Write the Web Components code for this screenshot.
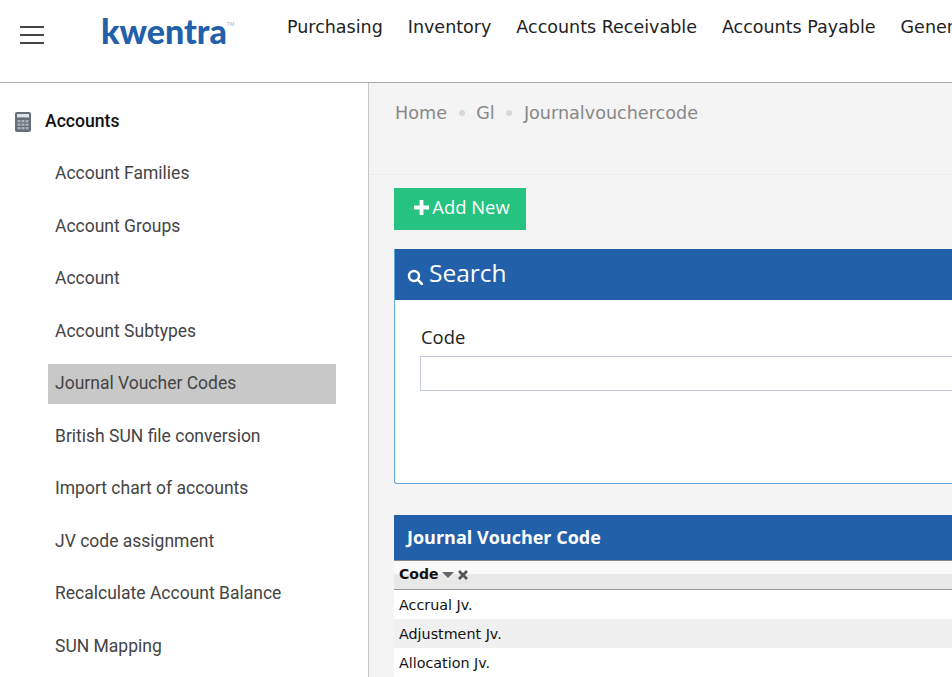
<!DOCTYPE html>
<html><head><meta charset="utf-8"><title>Journal Voucher Codes</title>
<style>
html,body{margin:0;padding:0;height:677px;overflow:hidden;background:#fff}
body{font-family:"Roboto",sans-serif;color:#222;display:block}
app-shell{width:952px;height:677px}
</style></head><body>
<app-shell>
<top-bar></top-bar>
<div slot="side">
<side-nav>
<nav-item>Account Families</nav-item>
<nav-item>Account Groups</nav-item>
<nav-item>Account</nav-item>
<nav-item>Account Subtypes</nav-item>
<nav-item active>Journal Voucher Codes</nav-item>
<nav-item>British SUN file conversion</nav-item>
<nav-item>Import chart of accounts</nav-item>
<nav-item>JV code assignment</nav-item>
<nav-item>Recalculate Account Balance</nav-item>
<nav-item>SUN Mapping</nav-item>
</side-nav>
</div>
<main-area slot="main"></main-area>
</app-shell>
<script>
function def(name, html){
  customElements.define(name, class extends HTMLElement{
    constructor(){super();this.attachShadow({mode:'open'}).innerHTML=html;}
  });
}
def('app-shell',`<style>
:host{display:grid;grid-template-rows:83px 594px;grid-template-columns:369px 583px;overflow:hidden}
.t{grid-column:1/3;min-width:0;overflow:hidden}
.s{min-width:0;overflow:hidden}
.m{min-width:0;overflow:hidden}
</style><div class="t"><slot></slot></div><div class="s"><slot name="side"></slot></div><div class="m"><slot name="main"></slot></div>`);
def('top-bar',`<style>
:host{display:flex;height:83px;box-sizing:border-box;border-bottom:1px solid #aaa;background:#fff;overflow:hidden}
.burger{display:flex;flex-direction:column;gap:6px;width:24px;margin:26px 0 0 20px;flex:none}
.burger i{display:block;height:2px;background:#444}
.logo{margin:11px 0 0 57px;width:135px;height:40px;position:relative;font:900 34px/40px "Lato",sans-serif;color:#2260aa;flex:none}
.logo sup{position:absolute;left:126px;top:9px;font:400 5px/8px "Roboto",sans-serif;color:#9fb6d2}
nav{display:flex;gap:25px;margin:16px 0 0 51px;font:400 17.5px/22px "DejaVu Sans",sans-serif;color:#222;white-space:nowrap;flex:none}
</style><div class="burger"><i></i><i></i><i></i></div>
<div class="logo">kwentra<sup>TM</sup></div>
<nav><span>Purchasing</span><span>Inventory</span><span>Accounts Receivable</span><span>Accounts Payable</span><span>General Ledger</span></nav>`);
def('side-nav',`<style>
:host{display:block;height:594px;box-sizing:border-box;border-right:1px solid #c8c8c8;background:#fff;overflow:hidden}
.h{display:flex;align-items:center;gap:14px;margin:28px 0 0 15px;height:22px;font:500 17.6px/22px "Roboto",sans-serif;color:#111}
.h span{margin-bottom:2px}
svg{display:block;width:16px;height:20px}
.l{margin:20px 0 0 48px;width:288px;display:flex;flex-direction:column}
</style><div class="h"><svg viewBox="0 0 16 20"><rect width="16" height="20" rx="2" fill="#666e78"/><rect x="2" y="2" width="12" height="3.4" fill="#dfe3e8"/><g fill="#aab0b8"><rect x="2.5" y="8" width="3" height="2.4"/><rect x="6.5" y="8" width="3" height="2.4"/><rect x="10.5" y="8" width="3" height="2.4"/><rect x="2.5" y="11.5" width="3" height="2.4"/><rect x="6.5" y="11.5" width="3" height="2.4"/><rect x="10.5" y="11.5" width="3" height="2.4"/><rect x="2.5" y="15" width="3" height="2.4"/><rect x="6.5" y="15" width="3" height="2.4"/><rect x="10.5" y="15" width="3" height="2.4"/></g></svg><span>Accounts</span></div><div class="l"><slot></slot></div>`);
def('nav-item',`<style>
:host{display:block;height:40px;margin-bottom:12.5px;padding-left:7px;font:400 17.5px/40px "Roboto",sans-serif;color:#444;white-space:nowrap}
:host([active]){background:linear-gradient(#c8c8c8,#c8c8c8) 0 1px no-repeat;box-shadow:0 1px 0 #c8c8c8}
</style><slot></slot>`);
def('main-area',`<style>
:host{display:block;height:594px;background:#f4f4f4;overflow:hidden}
.crumb{height:92px;box-sizing:border-box;border-bottom:1px solid #e8edf2;padding:18px 0 0 26px;font:400 17.6px/24px "DejaVu Sans",sans-serif;color:#888}
.crumb div{display:flex;gap:11.6px;align-items:center;height:24px}
.crumb i{display:block;width:6px;height:6px;border-radius:50%;background:#d8d8d8}
.btn{display:flex;align-items:center;justify-content:center;gap:3px;width:132px;height:42px;padding:0 0 5px 4px;margin:13px 0 0 25px;background:#26c281;color:#fff;font:500 18.4px/24px "Open Sans",sans-serif;box-sizing:border-box}
.btn svg{width:15px;height:15px;margin-top:2px}
.panel{margin:19px 0 0 25px;width:600px;height:235px;border:1px solid #63a8dd;border-width:0 0 1px 1px;border-bottom-left-radius:3px;background:#fff;box-sizing:border-box}
.phead{height:51px;background:#2260aa;color:#fff;display:flex;align-items:center;gap:6px;padding:0 0 4px 12px;box-sizing:border-box;font:400 24.5px/30px "Open Sans",sans-serif}
.phead svg{width:16px;height:16px;margin-top:9px}
.lab{margin:25px 0 0 26px;font:400 18.4px/24px "Open Sans",sans-serif;color:#222}
.inp{margin:7px 0 0 25px;height:35px;border:1px solid #c2cadb;background:#fff;box-sizing:border-box;border-right:0}
.grid{margin:31px 0 0 25px;width:600px}
.ghead{height:45px;background:#2260aa;color:#fff;font:700 18px/45px "Open Sans",sans-serif;padding-left:13px;border-bottom:1px solid #888}
.th{height:29px;box-sizing:border-box;border-bottom:1px solid #999;background:linear-gradient(#fafafa 0,#fafafa 13px,#e8e8e8 13px,#e8e8e8 100%);display:flex;align-items:center;gap:4px;padding:0 0 2px 5px;font:700 14px/24px "DejaVu Sans",sans-serif;color:#111}
.th svg{width:12px;height:12px;display:block;margin-top:2px}
.row{height:29px;padding-left:5px;font:400 14.3px/31px "DejaVu Sans",sans-serif;color:#111;background:#fff}
.row.alt{background:#f0f0f0}
</style>
<div class="crumb"><div><span>Home</span><i></i><span>Gl</span><i></i><span>Journalvouchercode</span></div></div>
<div class="btn"><svg viewBox="0 0 15 15"><path d="M5.6 0h3.8v5.6H15v3.8H9.4V15H5.6V9.4H0V5.6h5.6z" fill="#fff"/></svg><span>Add New</span></div>
<div class="panel"><div class="phead"><svg viewBox="0 0 16 16"><circle cx="7" cy="7" r="5" fill="none" stroke="#fff" stroke-width="2.4"/><path d="M10.6 10.6 15 15" stroke="#fff" stroke-width="2.6" stroke-linecap="round"/></svg><span>Search</span></div>
<div class="lab">Code</div><div class="inp"></div></div>
<div class="grid"><div class="ghead">Journal Voucher Code</div>
<div class="th"><span>Code</span><svg viewBox="0 0 12 12"><path d="M0 3h12L6 9z" fill="#666"/></svg><svg viewBox="0 0 12 12" style="margin-left:-1px"><path d="M2 2l8 8M10 2l-8 8" stroke="#555" stroke-width="2.8"/></svg></div>
<div class="row">Accrual Jv.</div><div class="row alt">Adjustment Jv.</div><div class="row">Allocation Jv.</div></div>`);
</script>
</body></html>
